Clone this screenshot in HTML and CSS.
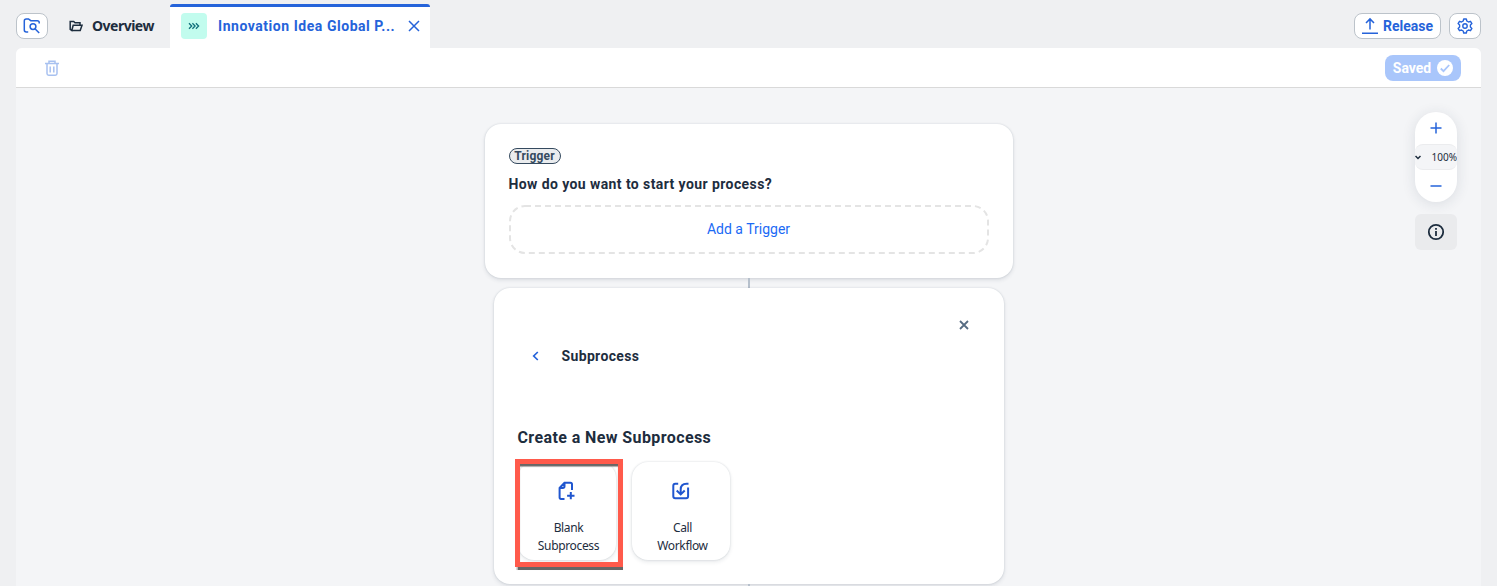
FILE: index.html
```html
<!DOCTYPE html>
<html lang="en">
<head>
<meta charset="utf-8">
<title>Process Builder</title>
<link rel="stylesheet" href="styles.css">
</head>
<body>
<header class="header">
  <button class="btn btn-square" aria-label="Browse"><svg width="18" height="18" viewBox="0 0 18 18" class="line"><path d="M5.2 15H3.200Q1.300 15 1.300 13.100V4Q1.300 2 3.200 2H5.500L7.800 3.700H14.200Q16.200 3.700 16.200 5.600V6.500"/><circle cx="10" cy="9.600" r="2.900"/><path d="M12.200 12L16.200 16.100"/></svg></button>
  <div class="tab">
    <svg class="folder line" width="14" height="12" viewBox="0 0 14 12"><path d="M2.800 10.500H11.200L13 5.300H4.200L2.800 10.500L1.200 9.300V1.500H4.700L6 2.800H11V5"/></svg>
    <span class="tab-name">Overview</span>
  </div>
  <div class="tab tab-active">
    <span class="process-icon"><svg class="line" width="12" height="8" viewBox="0 0 12 8"><path d="M1 1.200L3.700 4L1 6.800M4.400 1.200L7.100 4L4.400 6.800M7.900 1.200L10.600 4L7.900 6.800"/></svg></span>
    <span class="tab-title">Innovation Idea Global P...</span>
    <svg class="line" width="12" height="12" viewBox="0 0 12 12"><path d="M1 1L11 11M11 1L1 11"/></svg>
  </div>
  <div class="actions">
    <button class="btn btn-release"><svg class="line" width="16" height="18" viewBox="0 0 16 18"><path d="M8 12.500V2M4 6L8 1.900L12 6M0 16.300H16"/></svg><span>Release</span></button>
    <button class="btn btn-square" aria-label="Settings"><svg class="line gear" width="16" height="16" viewBox="0 0 16 16"><path d="M6.700 1H9.300L9.800 3L11.500 4L13.500 3.300L14.900 5.600L13.400 7V9L14.900 10.400L13.500 12.700L11.500 12L9.800 13L9.300 15H6.700L6.200 13L4.500 12L2.500 12.700L1.100 10.400L2.600 9V7L1.100 5.600L2.500 3.300L4.500 4L6.200 3Z"/><circle cx="8" cy="8" r="2.200"/></svg></button>
  </div>
</header>
<main class="panel">
  <div class="toolbar">
    <svg class="line trash" width="14" height="16" viewBox="0 0 14 16"><path d="M0 3.600H14M4 3.600V1.200H10V3.600M2 3.600V13.500Q2 15.200 3.700 15.200H10.300Q12 15.200 12 13.500V3.600M5.200 6.500V12.500M8.800 6.500V12.500"/></svg>
    <button class="saved"><span>Saved</span><svg width="16" height="16" viewBox="0 0 16 16"><circle cx="8" cy="8" r="8" fill="#fff"/><path d="M3.800 8.500L6.500 11.200L12.200 5" fill="none" stroke="#a9c6fb" stroke-width="1.800"/></svg></button>
  </div>
  <div class="canvas">
    <div class="flow">
      <section class="card trigger-card">
        <span class="tag">Trigger</span>
        <h2 class="question">How do you want to start your process?</h2>
        <button class="add-trigger"><svg class="dash" width="480" height="49"><rect x="1" y="1" width="478" height="47" rx="15"/></svg><span class="add-label">Add a Trigger</span></button>
      </section>
      <div class="connector"></div>
      <section class="card step-card">
        <svg class="line step-close" width="10" height="10" viewBox="0 0 10 10"><path d="M1 1L9 9M9 1L1 9"/></svg>
        <div class="step-head">
          <svg class="line back" width="7" height="10" viewBox="0 0 7 10"><path d="M5.800 1L1.700 5L5.800 9"/></svg>
          <h3 class="step-title">Subprocess</h3>
        </div>
        <h2 class="group-title">Create a New Subprocess</h2>
        <div class="tiles">
          <div class="tile">
            <svg class="line tile-icon" width="18" height="20" viewBox="0 0 18 20"><path d="M6.500 18H3Q1.600 18 1.600 16.600V7L6.500 1.700H12.500Q14 1.700 14 3.200V9M2 7H4.800Q6.500 7 6.500 5.300V2M12.800 11V18.300M9.100 14.700H16.500"/></svg>
            <span class="tile-label">Blank<br>Subprocess</span>
            <span class="highlight"></span>
          </div>
          <div class="tile">
            <svg class="line tile-icon" width="18" height="20" viewBox="0 0 18 20"><path d="M6.200 2.700H3.300Q1.300 2.700 1.300 4.700V15.300Q1.300 17.300 3.300 17.300H14.100Q16.100 17.300 16.100 15.300V6.500M16.500 2.700H14.500Q8.700 2.700 8.700 8.500V13M4.700 9.500L8.700 13.400L12.700 9.500"/></svg>
            <span class="tile-label">Call<br>Workflow</span>
          </div>
        </div>
      </section>
      <div class="connector"></div>
    </div>
    <aside class="tools">
      <div class="zoom">
        <button class="zoom-btn" aria-label="Zoom in"><svg class="line" width="12" height="12" viewBox="0 0 12 12"><path d="M6 .5V11.500M.5 6H11.500"/></svg></button>
        <div class="zoom-level"><svg class="line" width="6" height="5" viewBox="0 0 6 5"><path d="M.5 1L3 3.500L5.500 1"/></svg><span>100%</span></div>
        <button class="zoom-btn" aria-label="Zoom out"><svg class="line" width="12" height="12" viewBox="0 0 12 12"><path d="M.5 6H11.500"/></svg></button>
      </div>
      <button class="info" aria-label="Information"><svg class="line" width="18" height="18" viewBox="0 0 18 18"><circle cx="9" cy="9" r="7.200"/><path d="M9 8V13M9 4.900V6.700"/></svg></button>
    </aside>
  </div>
</main>
</body>
</html>
```
FILE: styles.css
```css
* { box-sizing: border-box; }
body {
  margin: 0;
  height: 586px;
  overflow: hidden;
  display: flex;
  flex-direction: column;
  background: #eff0f2;
  color: #1d2d3e;
  font: 14px/18px "Noto Sans", Roboto, sans-serif;
}
button { font: inherit; margin: 0; padding: 0; border: 0; background: none; color: inherit; }
h2, h3 { margin: 0; }
svg { display: block; flex: none; }
.line { fill: none; stroke: currentColor; stroke-width: 1.5; }

.header { height: 48px; flex: none; display: flex; padding: 0 16px; }
.btn {
  height: 26px;
  margin-top: 13px;
  border: 1px solid #bcc3ca;
  border-radius: 8px;
  background: #fff;
  color: #2563da;
  display: flex;
  align-items: center;
  justify-content: center;
  font-family: Roboto, sans-serif;
  font-weight: 700;
}
.btn-square { width: 32px; }
.tab { display: flex; align-items: center; height: 44px; margin-top: 4px; padding-left: 21px; width: 122px; font-weight: 700; }
.folder { margin-right: 9px; }
.tab-name { letter-spacing: -.5px; }
.tab-active {
  width: 260px;
  padding: 0 10px 0 11px;
  background: linear-gradient(#2563da 3px, #fff 3px);
  border-radius: 3px 3px 0 0;
  color: #2563da;
  font-family: Roboto, sans-serif;
}
.process-icon { width: 26px; height: 26px; flex: none; border-radius: 4px; background: #c2fcee; color: #11707b; display: flex; align-items: center; justify-content: center; }
.process-icon .line { stroke-width: 1.3; }
.tab-title { width: 190px; flex: none; margin-left: 11px; letter-spacing: .54px; white-space: nowrap; }
.actions { margin-left: auto; display: flex; gap: 8px; }
.btn-release { width: 87px; gap: 5px; }
.gear { stroke-width: 1.4; stroke-linejoin: round; }

.panel { flex: 1; margin: 0 16px; background: #f4f5f7; border-radius: 6px 6px 0 0; overflow: hidden; display: flex; flex-direction: column; }
.toolbar { height: 40px; flex: none; background: #fff; border-bottom: 1px solid #d9d9d9; padding: 0 20px 0 29px; display: flex; align-items: center; justify-content: space-between; }
.trash { color: #a8c1f0; }
.saved { width: 76px; height: 26px; border-radius: 8px; background: #a9c6fb; color: #fff; font-family: Roboto, sans-serif; font-weight: 700; display: flex; align-items: center; justify-content: center; gap: 6px; }

.canvas { flex: 1; min-height: 0; display: grid; grid-template-columns: 66px 1fr 66px; }
.flow { grid-column: 2; display: flex; flex-direction: column; align-items: center; padding-top: 36px; }
.card { background: #fff; border-radius: 16px; box-shadow: 0 0 2px rgba(34,53,72,.16), 0 2px 4px rgba(34,53,72,.12); flex: none; }
.trigger-card { width: 528px; height: 154px; padding: 24px; display: flex; flex-direction: column; align-items: flex-start; }
.tag { width: 52px; height: 16px; border: 1px solid #354a5f; border-radius: 8px; background: #eaecee; color: #354a5f; font: 700 12px/14px Roboto, sans-serif; letter-spacing: .2px; text-align: center; }
.question { margin-top: 11px; font: 700 14px/18px Roboto, sans-serif; letter-spacing: .41px; white-space: nowrap; }
.add-trigger { width: 480px; height: 49px; margin-top: 12px; color: #1b6af5; font-family: Roboto, sans-serif; display: grid; place-items: center; }
.add-trigger > * { grid-area: 1 / 1; }
.add-label { padding-bottom: 2px; }
.dash { fill: none; stroke: #e4e4e4; stroke-width: 2; stroke-dasharray: 6 4; }
.connector { width: 2px; height: 10px; flex: none; background: #b6c0cc; }
.step-card { width: 510px; height: 296px; padding: 32px 24px 24px; }
.step-close { margin-left: 441px; color: #556b82; stroke-width: 1.8; }
.step-head { display: flex; align-items: center; height: 18px; margin: 17px 0 0 14px; }
.back { color: #2563da; stroke-width: 1.7; }
.step-title { margin-left: 23px; font: 700 14px/18px Roboto, sans-serif; letter-spacing: .35px; }
.group-title { margin-top: 63px; font: 700 16px/20px Roboto, sans-serif; letter-spacing: .4px; white-space: nowrap; }
.tiles { display: flex; gap: 16px; margin-top: 14px; }
.tile { position: relative; width: 98px; height: 98px; border-radius: 16px; background: #fff; box-shadow: 0 0 2px rgba(34,53,72,.18), 0 2px 4px rgba(34,53,72,.1); padding-top: 19px; display: flex; flex-direction: column; align-items: center; text-align: center; font-size: 12px; }
.tile-icon { color: #2056cf; stroke-width: 2; margin-bottom: 18px; }
.tile-label { margin-left: 4px; letter-spacing: -.35px; }
.highlight { position: absolute; left: -3px; top: -3px; width: 108px; height: 108px; border: 5px solid #ff5a4b; box-shadow: 0 3px 1px -.5px #666, inset 0 3px 1px -.5px #666; }

.tools { grid-column: 3; padding-top: 24px; display: flex; flex-direction: column; gap: 12px; }
.zoom { width: 42px; height: 90px; overflow: hidden; border-radius: 21px; background: #fff; box-shadow: 0 2px 14px rgba(34,53,72,.12); }
.zoom-btn { width: 42px; height: 32px; display: grid; place-items: center; color: #2563da; }
.zoom-level { height: 26px; display: flex; align-items: center; justify-content: space-between; background: #f4f5f7; border: solid #ebecee; border-width: 1px 0; border-radius: 8px; font-size: 10px; white-space: nowrap; }
.info { width: 42px; height: 36px; border-radius: 6px; background: #eaebed; display: grid; place-items: center; }
.info .line { stroke-width: 1.8; }
```
